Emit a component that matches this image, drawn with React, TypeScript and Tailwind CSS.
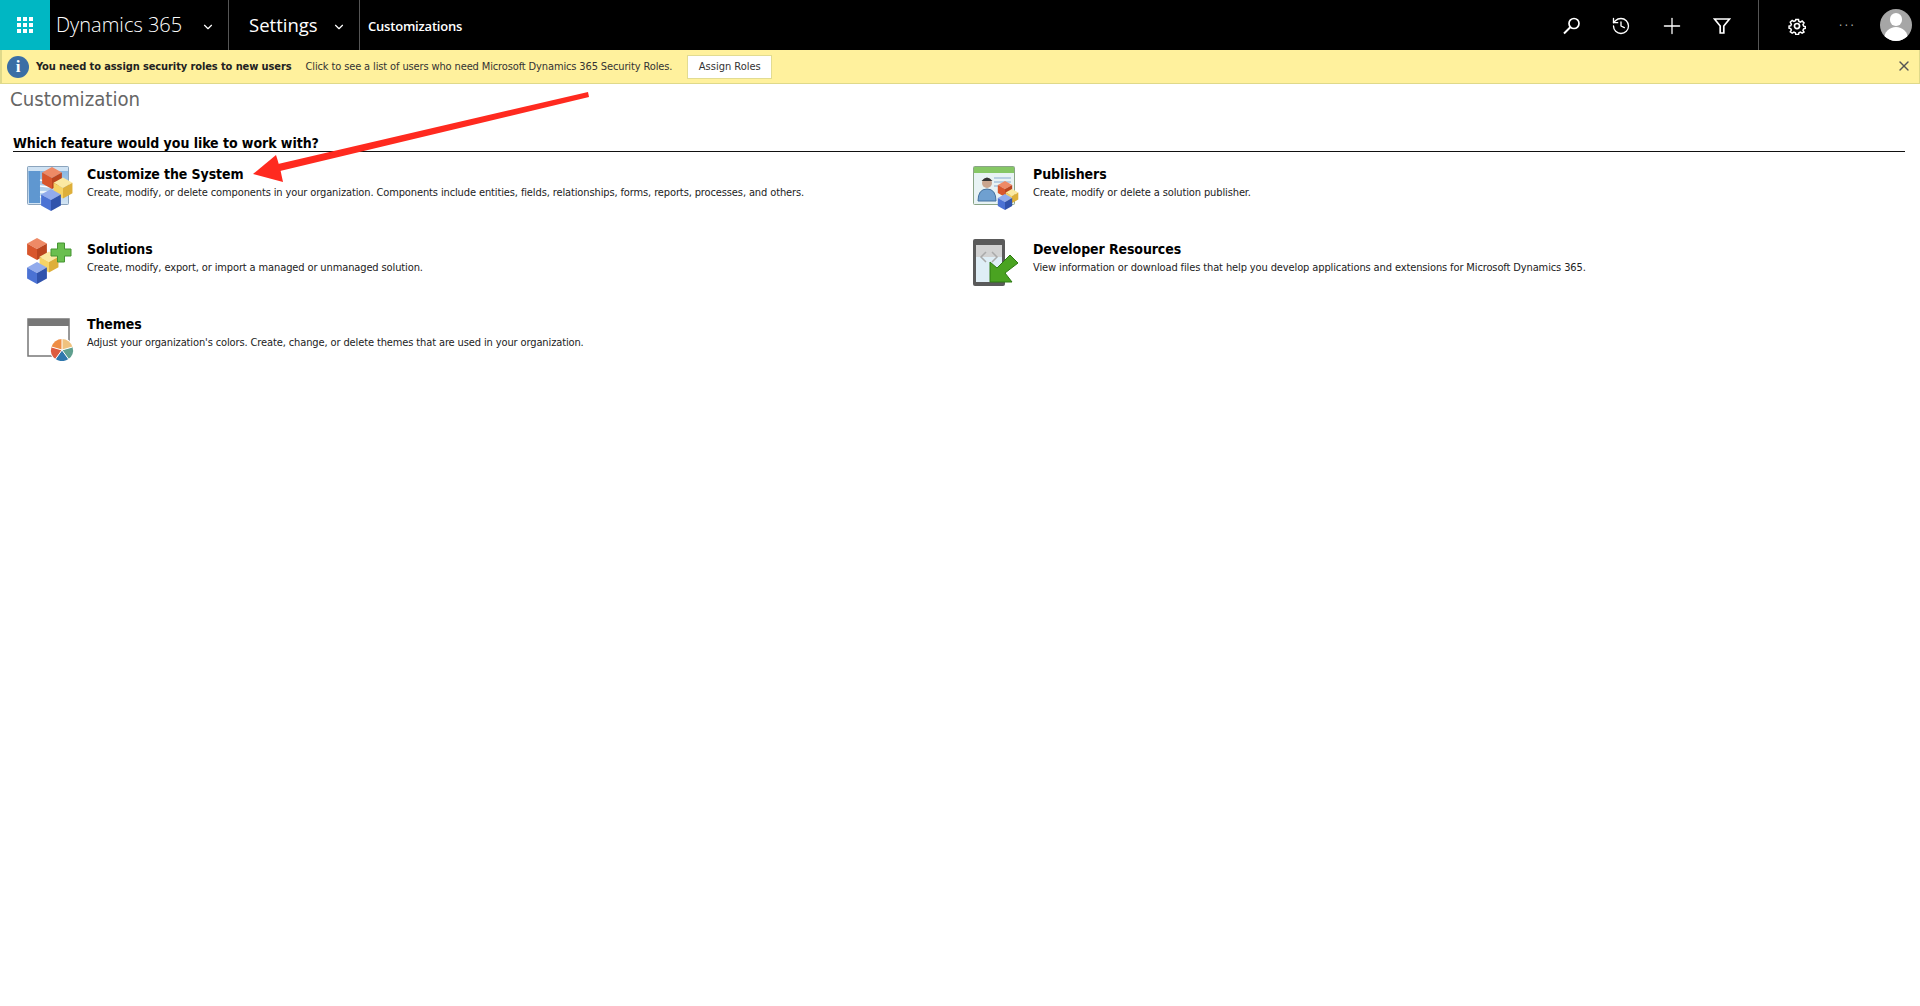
import React from "react";
import { History, Plus, X, ChevronDown } from "lucide-react";

const Cube = ({ x, y, s, top, left, right }: { x: number; y: number; s: number; top: string; left: string; right: string }) => (
  <g transform={`translate(${x} ${y}) scale(${s})`}>
    <path d="M0 -10 L9 -5 L0 0 L-9 -5 Z" fill={top} />
    <path d="M-9 -5 L0 0 L0 10 L-9 5 Z" fill={left} />
    <path d="M9 -5 L0 0 L0 10 L9 5 Z" fill={right} />
  </g>
);
const Red = (x: number, y: number, s: number) => <Cube x={x} y={y} s={s} top="#ee8a66" left="#d8562c" right="#bb451f" />;
const Yellow = (x: number, y: number, s: number) => <Cube x={x} y={y} s={s} top="#fbe9a2" left="#f6d365" right="#deaf3a" />;
const Blue = (x: number, y: number, s: number) => <Cube x={x} y={y} s={s} top="#92abec" left="#4b72d4" right="#3153ac" />;

const CustomizeIcon = () => (
  <svg width="48" height="48" viewBox="0 0 48 48">
    <defs>
      <linearGradient id="win" x1="0" y1="0" x2="0" y2="1">
        <stop offset="0" stopColor="#7fb0de" />
        <stop offset="1" stopColor="#d4e5f4" />
      </linearGradient>
    </defs>
    <rect x="0.5" y="3.5" width="41" height="38" rx="1" fill="url(#win)" stroke="#8ba4bd" />
    <rect x="1" y="4" width="40" height="4" fill="#cfe2f3" />
    <rect x="2" y="8" width="11" height="32" fill="#5f97d0" />
    <path d="M13 17 L32 21 M13 23 L32 25 M13 29 L28 29 M13 34 L24 32" stroke="#fff" strokeWidth="1.5" />
    {Red(25, 15, 1.1)}
    {Yellow(36, 25, 1.05)}
    {Blue(24, 37, 1.1)}
  </svg>
);
const SolutionsIcon = () => (
  <svg width="48" height="48" viewBox="0 0 48 48">
    {Red(10, 11, 1.1)}
    {Yellow(22, 24, 1.05)}
    {Blue(10, 35, 1.1)}
    <path d="M30.5 5 H37.5 V11 H44 V18 H37.5 V24 H30.5 V18 H24 V11 H30.5 Z" fill="#6abf4f" stroke="#459433" />
  </svg>
);
const ThemesIcon = () => (
  <svg width="48" height="48" viewBox="0 0 48 48">
    <rect x="1" y="6" width="41" height="37" fill="#fff" stroke="#777" strokeWidth="1.5" />
    <rect x="1" y="6" width="41" height="7" fill="#777" />
    <circle cx="35" cy="37" r="12" fill="#fff" />
    <path d="M35 37 L35 26 A11 11 0 0 1 45.5 34 Z" fill="#f0c27f" />
    <path d="M35 37 L45.5 34 A11 11 0 0 1 41.5 46 Z" fill="#5f9f8e" />
    <path d="M35 37 L41.5 46 A11 11 0 0 1 28.5 46 Z" fill="#2f77ad" />
    <path d="M35 37 L28.5 46 A11 11 0 0 1 24.5 34 Z" fill="#dd5c40" />
    <path d="M35 37 L24.5 34 A11 11 0 0 1 35 26 Z" fill="#ee8d45" />
    <path d="M35 26 V37 L45.5 34 M35 37 L41.5 46 M35 37 L28.5 46 M35 37 L24.5 34" stroke="#fff" fill="none" />
  </svg>
);
const PublishersIcon = () => (
  <svg width="48" height="48" viewBox="0 0 48 48">
    <rect x="0.5" y="3.5" width="41" height="38" rx="1" fill="#e8f3f4" stroke="#8aa487" />
    <rect x="1" y="4" width="40" height="6" fill="#86c765" />
    <path d="M21 15 H38 M21 19 H38 M21 23 H30" stroke="#a8c4dc" strokeWidth="1.5" />
    <circle cx="14" cy="20" r="5" fill="#c9a58e" />
    <path d="M8.5 18 Q14 11 19.5 18 Z" fill="#333" />
    <path d="M5 38 Q5 26 14 26 Q23 26 23 38 Z" fill="#6fa0d0" stroke="#44719e" />
    {Red(32, 26, 0.8)}
    {Yellow(39, 33, 0.7)}
    {Blue(32, 39, 0.8)}
  </svg>
);
const DevIcon = () => (
  <svg width="48" height="48" viewBox="0 0 48 48">
    <rect x="0" y="1" width="32" height="47" rx="2" fill="#5a5a5a" />
    <rect x="3" y="7" width="26" height="37" fill="#dfeef6" />
    <rect x="3" y="7" width="26" height="12" fill="#d2d2d2" />
    <path d="M13 14 L8 19 L13 24 M19 14 L24 19 L19 24" stroke="#aaa" strokeWidth="1.5" fill="none" />
    <path d="M37 17 L45 25 L32 35 L39 44 H17 V24 L24 30 Z" fill="#4aa321" stroke="#2c7a12" />
  </svg>
);

const SearchIcon = () => (
  <svg className="mt-[2px]" width="18" height="18" viewBox="0 0 18 18" fill="none" stroke="#fff" strokeWidth="1.7">
    <circle cx="11" cy="6.500" r="5" />
    <path d="M7.500 10 L1 16.500" strokeWidth="2" />
  </svg>
);
const FilterIcon = () => (
  <svg className="mt-[2px]" width="18" height="18" viewBox="0 0 18 18" fill="none" stroke="#fff" strokeWidth="1.7">
    <path d="M1.500 2 H16.500 L10.800 9 V16 H7.200 V9 Z" />
  </svg>
);
const Gear = () => (
  <svg width="18" height="18" viewBox="0 0 24 24" fill="none" stroke="#fff" strokeWidth="2.2">
    <circle cx="12" cy="12" r="3.400" />
    <path d="M10 2h4l.6 3 2.200 1 2.600-1.600 2.800 2.800L20.600 9.800l1 2.200 2.400.6v2.800l-2.400.6-1 2.200 1.600 2.600-2.800 1.600-2.600-1.600-2.200 1-.6 2.700h-4l-.6-2.700-2.200-1-2.600 1.600L1.800 20.400l1.600-2.600-1-2.200L0 15v-3l2.400-.6 1-2.200L1.800 6.200l2.800-2.800 2.600 1.600 2.200-1z" transform="translate(1.400 1.400) scale(0.9)" />
  </svg>
);

const Feature = ({ icon, title, desc }: { icon: React.ReactNode; title: string; desc: string }) => (
  <div className="flex h-[75px] items-start">
    <div className="ml-[14px] mr-[12px] mt-[11px] w-[48px] h-[48px] shrink-0">{icon}</div>
    <div className="pt-[12px]">
      <div className="text-[14px] leading-[20px] font-bold tracking-[-0.1px] text-black">{title}</div>
      <div className="mt-[1px] text-[11px] leading-[16px] tracking-[-0.12px] text-[#222]">{desc}</div>
    </div>
  </div>
);

export default function App() {
  return (
    <div className="relative min-h-[1006px] bg-white font-['DejaVu_Sans_Condensed','DejaVu_Sans',sans-serif] font-stretch-condensed">
      <header className="flex h-[50px] items-center bg-black text-white">
        <div className="flex h-full w-[50px] items-center justify-center bg-[#00b7c3]">
          <div className="grid grid-cols-3 gap-[2px]">
            {Array.from({ length: 9 }).map((_, i) => (
              <span key={i} className="w-[4px] h-[4px] bg-white" />
            ))}
          </div>
        </div>
        <div className="flex h-full w-[179px] items-center border-r border-[#555] pl-[6px]">
          <span className="text-[20px] font-['Open_Sans'] font-light font-stretch-normal">Dynamics 365</span>
          <ChevronDown size={14} className="ml-[19px] mt-[3px]" />
        </div>
        <div className="flex h-full w-[131px] items-center border-r border-[#555] pl-[20px]">
          <span className="text-[18.5px] font-['Open_Sans'] font-stretch-normal">Settings</span>
          <ChevronDown size={14} className="ml-[14px] mt-[3px]" />
        </div>
        <span className="ml-[8px] mt-[3px] text-[13px] tracking-[-0.2px] font-['Open_Sans'] font-semibold font-stretch-normal">Customizations</span>
        <div className="ml-auto flex h-full items-center">
          <div className="flex h-full items-center gap-[31px] border-r border-[#555] pr-[27px]">
            <SearchIcon />
            <History size={20} strokeWidth={1.6} className="mt-[2px] -ml-[1px]" />
            <Plus size={26} strokeWidth={1.2} className="mt-[2px] -mx-[3px]" />
            <FilterIcon />
          </div>
          <div className="ml-[29px] mt-[2px]"><Gear /></div>
          <span className="ml-[33px] mt-[2px] text-[13px] tracking-[2px] text-[#aaa]">···</span>
          <div className="relative ml-[24px] mr-[8px] h-[32px] w-[32px] overflow-hidden rounded-full bg-[#a6a6a6]">
            <span className="absolute left-[10px] top-[4px] h-[13px] w-[12px] rounded-full bg-white" />
            <span className="absolute left-[4px] top-[18px] h-[16px] w-[24px] rounded-t-full bg-white" />
          </div>
        </div>
      </header>

      <div className="flex h-[34px] items-center border-b border-l-2 border-r border-[#dfd98a] bg-[#fff19d] pl-[5px] pr-[7px]">
        <span className="flex h-[22px] w-[22px] items-center justify-center rounded-full bg-[#3a6ea5] text-[17px] font-bold leading-none text-white font-['Liberation_Serif']">i</span>
        <span className="ml-[7px] mt-[2px] text-[11px] font-bold tracking-[-0.1px] text-[#222]">You need to assign security roles to new users</span>
        <span className="ml-[14px] mt-[2px] text-[11px] tracking-[-0.13px] text-[#333]">Click to see a list of users who need Microsoft Dynamics 365 Security Roles.</span>
        <button className="ml-[15px] mt-[1px] h-[24px] w-[85px] border border-[#e2dc92] bg-white text-[11px] text-[#333]">Assign Roles</button>
        <X size={16} strokeWidth={2} className="ml-auto -mt-[2px] text-[#555]" />
      </div>

      <h1 className="ml-[10px] pt-[1px] text-[20.2px] leading-[28px] text-[#666]">Customization</h1>
      <div className="ml-[13px] mr-[15px] mt-[23px] border-b border-[#111] text-[14px] leading-[15px] font-bold tracking-[-0.05px] text-black">Which feature would you like to work with?</div>

      <div className="ml-[13px] grid grid-cols-[946px_1fr]">
        <Feature icon={<CustomizeIcon />} title="Customize the System" desc="Create, modify, or delete components in your organization. Components include entities, fields, relationships, forms, reports, processes, and others." />
        <Feature icon={<PublishersIcon />} title="Publishers" desc="Create, modify or delete a solution publisher." />
        <Feature icon={<SolutionsIcon />} title="Solutions" desc="Create, modify, export, or import a managed or unmanaged solution." />
        <Feature icon={<DevIcon />} title="Developer Resources" desc="View information or download files that help you develop applications and extensions for Microsoft Dynamics 365." />
        <Feature icon={<ThemesIcon />} title="Themes" desc="Adjust your organization's colors. Create, change, or delete themes that are used in your organization." />
      </div>

      <svg className="absolute left-[240px] top-[85px]" width="360" height="105" viewBox="240 85 360 105">
        <path d="M588 92 L589 97 L280 171 L278 164 Z" fill="#ff2a1f" />
        <path d="M253 174 L276 155 L280 168 L283 182 Z" fill="#ff2a1f" />
      </svg>
    </div>
  );
}
